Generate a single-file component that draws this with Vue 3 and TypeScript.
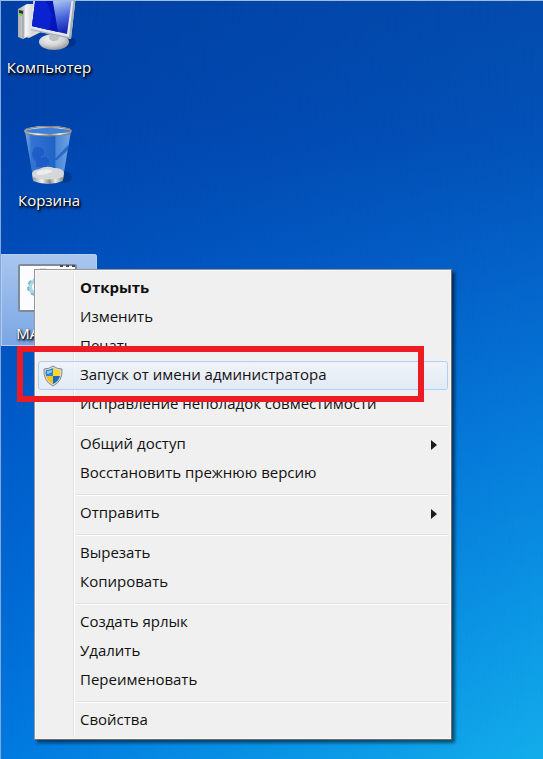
<script setup lang="ts">
interface MenuEntry {
  label: string
  bold?: boolean
  active?: boolean
  submenu?: boolean
}

const groups: MenuEntry[][] = [
  [
    { label: 'Открыть', bold: true },
    { label: 'Изменить' },
    { label: 'Печать' },
    { label: 'Запуск от имени администратора', active: true },
    { label: 'Исправление неполадок совместимости' },
  ],
  [{ label: 'Общий доступ', submenu: true }, { label: 'Восстановить прежнюю версию' }],
  [{ label: 'Отправить', submenu: true }],
  [{ label: 'Вырезать' }, { label: 'Копировать' }],
  [{ label: 'Создать ярлык' }, { label: 'Удалить' }, { label: 'Переименовать' }],
  [{ label: 'Свойства' }],
]
</script>

<template>
  <main class="desktop">
    <div class="shortcuts">
      <button class="shortcut" type="button">
        <svg class="picture" viewBox="0 0 96 68" aria-hidden="true">
          <defs>
            <linearGradient id="screen" x1="0.3" y1="0" x2="0.6" y2="1">
              <stop offset="0" stop-color="#c3d3fa" />
              <stop offset="0.25" stop-color="#a9bff5" />
              <stop offset="0.65" stop-color="#4a68dc" />
              <stop offset="1" stop-color="#1226b4" />
            </linearGradient>
            <linearGradient id="tower" x1="0" y1="0" x2="1" y2="0">
              <stop offset="0" stop-color="#a9adb0" />
              <stop offset="0.35" stop-color="#d5d7d8" />
              <stop offset="0.4" stop-color="#f6f6f6" />
              <stop offset="1" stop-color="#bfc2c6" />
            </linearGradient>
            <radialGradient id="foot" cx="0.4" cy="0.3" r="0.7">
              <stop offset="0" stop-color="#f4f4f4" />
              <stop offset="0.6" stop-color="#d2d3d4" />
              <stop offset="1" stop-color="#96999d" />
            </radialGradient>
          </defs>
          <g transform="translate(-1 12)">
            <ellipse cx="63" cy="42" rx="13" ry="6" fill="#00215f" opacity="0.45" />
            <path d="M18 9L27 4H37V32L23 39L18 37Z" fill="url(#tower)" />
            <path d="M23 10V38" stroke="#8d9195" />
            <path d="M19 10L23 11V14L19 13Z" fill="#2c3336" />
            <path d="M19 13L22 14V16L19 15Z" fill="#5be01c" />
            <path d="M26 37L38 30L41 32L29 38Z" fill="#dcddde" />
            <ellipse cx="54" cy="42" rx="15" ry="8" fill="url(#foot)" />
            <path d="M50 29L62 32L58 40Q53 43 49 39Z" fill="#bdc0c3" />
            <path d="M34 -8L76 -5L71 39L31 30Z" fill="#e4e6e8" />
            <path d="M71 39L76 -5L74 -5L69 37L31 29V30Z" fill="#a5adb8" />
            <path d="M36 -6L72 -3L67 34L32 26Z" fill="url(#screen)" />
            <path d="M36 -6L52 -4L58 32L32 26Z" fill="#0415ba" />
            <path d="M36 -6L44 -5L52 15L49 30L32 26Z" fill="#0a22cf" />
          </g>
        </svg>
        <span class="caption">Компьютер</span>
      </button>

      <button class="shortcut" type="button">
        <svg class="picture" viewBox="0 0 96 68" aria-hidden="true">
          <defs>
            <linearGradient id="glass" x1="0" y1="0" x2="1" y2="0">
              <stop offset="0" stop-color="#a9cdf5" stop-opacity="0.8" />
              <stop offset="0.14" stop-color="#4585dc" stop-opacity="0.75" />
              <stop offset="0.64" stop-color="#2c70d2" stop-opacity="0.7" />
              <stop offset="0.68" stop-color="#5c98e2" stop-opacity="0.8" />
              <stop offset="1" stop-color="#86b4ec" stop-opacity="0.85" />
            </linearGradient>
            <linearGradient id="metal" x1="0" y1="0" x2="1" y2="0">
              <stop offset="0" stop-color="#9a9da0" />
              <stop offset="0.3" stop-color="#f2f2f2" />
              <stop offset="0.55" stop-color="#8f8d8b" />
              <stop offset="0.75" stop-color="#e9e9e9" />
              <stop offset="1" stop-color="#85898e" />
            </linearGradient>
          </defs>
          <g transform="translate(-1 -121)">
            <ellipse cx="64" cy="177" rx="8" ry="6" fill="#00215f" opacity="0.35" />
            <path d="M25 131L33 178Q48 186 63 178L71 131Z" fill="url(#glass)" />
            <path d="M33 151q1-5 6-4q5 1 5 5q1 4-3 4l0 3q1-3 5-2q4 2 3 6q-1 4-5 4h-8v-6q-3-1-3-4q-2-3 0-6Z" fill="#1c55c4" opacity="0.75" />
            <path d="M68 145L54 160L57 160L68 150Z" fill="#1f5fc2" opacity="0.8" />
            <path d="M32 174Q32 170 39 169Q47 165 54 168Q63 168 64 173L63 180Q48 186 33 180Z" fill="#d5d7d9" />
            <path d="M37 172Q45 167 53 171Q48 175 37 175Z" fill="#eceded" />
            <path d="M33 177Q48 182 63 177V181Q48 187 33 181Z" fill="url(#metal)" />
            <ellipse cx="48" cy="131" rx="23" ry="4" fill="#3c80d8" stroke="url(#metal)" stroke-width="2" />
            <path d="M26 129Q48 124 70 129" fill="none" stroke="#85827e" />
            <path d="M26 134Q48 138 70 134" fill="none" stroke="#85827e" />
          </g>
        </svg>
        <span class="caption">Корзина</span>
      </button>

      <button class="shortcut selected" type="button">
        <svg class="picture" viewBox="0 0 96 68" aria-hidden="true">
          <g transform="translate(-1 -254)">
            <rect x="19" y="265" width="57" height="46" rx="1" fill="#fafcfd" stroke="#7f8b99" stroke-width="2" />
            <path d="M60 266h3M66 266h3M72 266h3" stroke="#3d4b5d" stroke-width="2" />
            <path d="M40 269h6" stroke="#a8bcc6" />
            <circle cx="36" cy="287" r="6" fill="none" stroke="#a9dbe6" stroke-width="4" />
            <circle cx="36" cy="287" r="8" fill="none" stroke="#7fb6c8" stroke-width="2" stroke-dasharray="4 3" />
          </g>
        </svg>
        <span class="caption">MAS.cmd</span>
      </button>
    </div>

    <nav class="menu" aria-label="Контекстное меню">
      <ul v-for="(group, index) in groups" :key="index" class="group">
        <li v-for="entry in group" :key="entry.label" class="row">
          <button class="entry" :class="{ bold: entry.bold, active: entry.active }" type="button">
            <span class="slot">
              <svg v-if="entry.active" class="shield" viewBox="0 0 20 22" aria-hidden="true">
                <path d="M10 1Q14 4 19 4Q20 16 10 21Q0 16 1 4Q6 4 10 1Z" fill="#d7dadd" stroke="#858b91" />
                <path d="M10 3V11H3Q2 8 3 5Q7 5 10 3Z" fill="#2586d8" />
                <path d="M10 3Q13 5 17 5Q18 8 17 11H10Z" fill="#fbd530" />
                <path d="M3 11H10V19Q4 16 3 11Z" fill="#f6c21c" />
                <path d="M17 11H10V19Q16 16 17 11Z" fill="#1c69c0" />
                <path d="M4 6Q7 6 9 5V7Q6 9 4 9Z" fill="#86c7f5" />
              </svg>
            </span>
            <span class="text">{{ entry.label }}</span>
            <svg v-if="entry.submenu" class="arrow" viewBox="0 0 6 10" aria-hidden="true">
              <path d="M0 0L6 5L0 10Z" fill="#1c1c1c" />
            </svg>
          </button>
          <span v-if="entry.active" class="marker"></span>
        </li>
      </ul>
    </nav>
  </main>
</template>

<style>
body {
  margin: 0;
}
</style>

<style scoped>
.desktop {
  position: relative;
  z-index: 0;
  box-sizing: border-box;
  min-height: 100vh;
  overflow: hidden;
  border-top: 1px solid #9dbde2;
  border-left: 1px solid #7fa9dc;
  background: linear-gradient(#0040a4 0%, #0042aa 15%, #004cb8 33%, #0059c6 53%, #006ad4 80%, #007ae0 100%);
  font-family: "Open Sans", "Noto Sans", sans-serif;
  font-size: 15px;
}

/* Brighter right-hand side of the wallpaper, faded in from the left edge. */
.desktop::before {
  content: "";
  position: absolute;
  z-index: -1;
  inset: 0;
  background: linear-gradient(#034bac 0%, #0252b8 18%, #0466cb 38%, #067edb 59%, #0b96e4 80%, #13adea 100%);
  mask-image: linear-gradient(90deg, transparent, #000);
}

.shortcuts {
  display: flex;
  flex-direction: column;
  align-items: flex-start;
  gap: 41px;
  margin-top: -13px;
}

.shortcut {
  display: flex;
  flex-direction: column;
  align-items: center;
  box-sizing: border-box;
  width: 96px;
  padding: 0 0 2px;
  border: 0;
  background: none;
  font: inherit;
}

.shortcut.selected {
  border-radius: 0 3px 3px 0;
  background: linear-gradient(#a9c6ee, #7ba6e4);
  box-shadow: inset 0 0 0 1px #b4cdf0;
}

.picture {
  display: block;
  width: 96px;
  height: 68px;
}

.caption {
  color: #fff;
  line-height: 22px;
  text-shadow: 1px 1px 2px #000, 1px 2px 3px #000;
}

.menu {
  position: absolute;
  top: 268px;
  left: 33px;
  box-sizing: border-box;
  width: 418px;
  padding: 4px 3px;
  border: 1px solid #979797;
  border-right-color: #6c6c6c;
  border-bottom-color: #6c6c6c;
  background:
    linear-gradient(90deg, #e2e3e3 50%, #fff 50%) 38px 3px / 2px calc(100% - 6px) no-repeat,
    #f0f0f0;
  box-shadow: inset 0 0 0 1px #f7f7f7, 3px 3px 3px rgba(0, 0, 0, 0.5);
}

.group {
  margin: 0;
  padding: 0;
  list-style: none;
}

.group + .group::before {
  content: "";
  display: block;
  height: 1px;
  margin: 6px 0 3px 37px;
  border-top: 1px solid #e0e0e0;
  background: #fff;
}

.row {
  position: relative;
}

.entry {
  display: flex;
  align-items: center;
  box-sizing: border-box;
  width: 100%;
  height: 29px;
  padding: 0 10px 0 0;
  border: 1px solid transparent;
  border-radius: 3px;
  background: none;
  color: #111;
  font: inherit;
  text-align: left;
}

.entry.bold {
  font-weight: 700;
}

.entry.active {
  border-color: #aecff7;
  background: linear-gradient(rgba(240, 244, 250, 0.8), rgba(224, 233, 247, 0.8));
}

.slot {
  display: flex;
  flex: none;
  width: 37px;
  padding-left: 4px;
}

.shield {
  width: 20px;
  height: 22px;
}

.text {
  flex: 1;
  padding-bottom: 4px;
  white-space: nowrap;
}

.arrow {
  width: 6px;
  height: 10px;
}

.marker {
  position: absolute;
  z-index: 1;
  inset: -15px 24px -12px -21px;
  border: 6px solid #ed1c24;
  pointer-events: none;
}
</style>
